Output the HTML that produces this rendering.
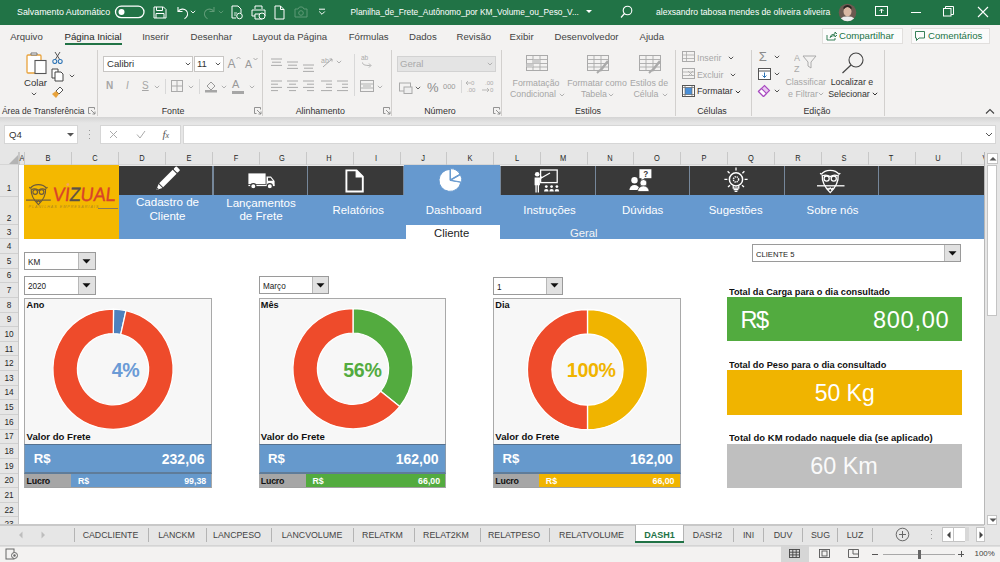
<!DOCTYPE html><html><head><meta charset="utf-8"><style>
html,body{margin:0;padding:0}
body{width:1000px;height:562px;overflow:hidden;position:relative;background:#fff;font-family:"Liberation Sans",sans-serif}
.t{position:absolute;white-space:nowrap}
.r{position:absolute;display:block}
</style></head><body>
<div class="r" style="left:0px;top:0px;width:1000.00px;height:24.50px;background:#217346;"></div>
<div class="t" style="left:17px;top:7.55px;font-size:8.9px;line-height:8.9px;color:#fff;font-weight:normal;font-family:'Liberation Sans';">Salvamento Automático</div>
<svg class="r" style="left:114px;top:5px" width="32" height="14" viewBox="0 0 32 14"><rect x="1.5" y="1.2" width="28.5" height="11.5" rx="5.75" fill="none" stroke="#fff" stroke-width="1.3"/><circle cx="7.5" cy="7" r="3" fill="#fff"/></svg>
<svg class="r" style="left:153px;top:6px" width="14" height="13" viewBox="0 0 14 13"><path d="M1 1h9.5l2.5 2.5V12H1z M3.5 1v3.5h6V1 M3 12V7.5h8V12" fill="none" stroke="#fff" stroke-width="1"/></svg>
<svg class="r" style="left:174px;top:5px" width="16" height="15" viewBox="0 0 16 15"><path d="M4 2v4.5h4.5" fill="none" stroke="#fff" stroke-width="1.1"/><path d="M4.3 6.3C6 3.8 10 3.3 12.3 5.6c2.4 2.4 1.5 6.5-1.8 8.2" fill="none" stroke="#fff" stroke-width="1.1"/></svg>
<svg class="r" style="left:190px;top:10px" width="6" height="4" viewBox="0 0 6 4"><path d="M0.8 0.8l2.2 2.2 2.2-2.2" fill="none" stroke="#fff" stroke-width="0.9"/></svg>
<svg class="r" style="left:202px;top:5px" width="16" height="15" viewBox="0 0 16 15"><path d="M12 2v4.5h-4.5" fill="none" stroke="#5f9a76" stroke-width="1.1"/><path d="M11.7 6.3C10 3.8 6 3.3 3.7 5.6c-2.4 2.4-1.5 6.5 1.8 8.2" fill="none" stroke="#5f9a76" stroke-width="1.1"/></svg>
<svg class="r" style="left:218px;top:10px" width="6" height="4" viewBox="0 0 6 4"><path d="M0.8 0.8l2.2 2.2 2.2-2.2" fill="none" stroke="#5f9a76" stroke-width="0.9"/></svg>
<svg class="r" style="left:231px;top:5px" width="13" height="15" viewBox="0 0 13 15"><path d="M1 1h6l3 3v4 M1 1v12h4" fill="none" stroke="#fff" stroke-width="1"/><circle cx="8.5" cy="11" r="2.8" fill="none" stroke="#fff" stroke-width="1"/><path d="M3 8h3M3 10h2" stroke="#fff" stroke-width="0.8"/></svg>
<svg class="r" style="left:251px;top:5px" width="15" height="15" viewBox="0 0 15 15"><path d="M4 4V1h7v3 M1 5h13v6h-3 M4 11H1V5 M4 9h7v5H4z" fill="none" stroke="#fff" stroke-width="1"/><circle cx="11" cy="11" r="3" fill="#217346" stroke="#fff" stroke-width="1"/></svg>
<svg class="r" style="left:274px;top:5px" width="11" height="15" viewBox="0 0 11 15"><path d="M1 1h5.5l3.5 3.5V14H1z M6.5 1v3.5H10" fill="none" stroke="#fff" stroke-width="1"/></svg>
<svg class="r" style="left:294px;top:6px" width="14" height="12" viewBox="0 0 14 12"><path d="M1 3h3l1.5-2h3L10 3h3v8H1z" fill="none" stroke="#5f9a76" stroke-width="1"/><circle cx="7" cy="7" r="2.3" fill="none" stroke="#5f9a76" stroke-width="1"/></svg>
<svg class="r" style="left:318px;top:8px" width="8" height="8" viewBox="0 0 8 8"><path d="M1 1.2h6" stroke="#fff" stroke-width="1"/><path d="M1.2 3.5l2.8 2.8 2.8-2.8" fill="none" stroke="#fff" stroke-width="1"/></svg>
<div class="t" style="left:350.5px;top:7.83px;font-size:8.35px;line-height:8.35px;color:#fff;font-weight:normal;font-family:'Liberation Sans';">Planilha_de_Frete_Autônomo_por KM_Volume_ou_Peso_V...</div>
<svg class="r" style="left:586px;top:10px" width="6" height="4" viewBox="0 0 6 4"><path d="M0 0h6l-3 3z" fill="#fff"/></svg>
<svg class="r" style="left:620px;top:5px" width="13" height="14" viewBox="0 0 13 14"><circle cx="7.5" cy="5.5" r="4.3" fill="none" stroke="#fff" stroke-width="1.1"/><path d="M4.5 8.5L1 12.5" stroke="#fff" stroke-width="1.2"/></svg>
<div class="t" style="left:656px;top:7.70px;font-size:8.6px;line-height:8.6px;color:#fff;font-weight:normal;font-family:'Liberation Sans';">alexsandro tabosa mendes de oliveira oliveira</div>
<svg class="r" style="left:838px;top:3px" width="19" height="19" viewBox="0 0 19 19"><defs><clipPath id="av"><circle cx="9.5" cy="9.5" r="8.8"/></clipPath></defs><g clip-path="url(#av)"><rect width="19" height="19" fill="#6b5a50"/><ellipse cx="9.5" cy="8.5" rx="4" ry="5" fill="#d9b8a3"/><path d="M5.5 6.5Q9.5 1.5 13.5 6.5L13.5 4Q9.5 0 5.5 4z" fill="#2a2320"/><path d="M1 19Q2 13 9.5 13.5Q17 13 18 19z" fill="#ececec"/></g></svg>
<svg class="r" style="left:875px;top:6px" width="13" height="11" viewBox="0 0 13 11"><rect x="0.5" y="0.5" width="12" height="9" fill="none" stroke="#fff" stroke-width="1"/><path d="M6.5 7V3M4.5 5l2-2 2 2" fill="none" stroke="#fff" stroke-width="1"/></svg>
<div class="r" style="left:911px;top:12px;width:10.00px;height:1.00px;background:#fff;"></div>
<svg class="r" style="left:943px;top:6px" width="11" height="11" viewBox="0 0 11 11"><rect x="0.5" y="2.5" width="7.5" height="7.5" fill="none" stroke="#fff" stroke-width="1"/><path d="M2.5 2.5V0.5h8v8H8" fill="none" stroke="#fff" stroke-width="1"/></svg>
<svg class="r" style="left:977px;top:6px" width="12" height="12" viewBox="0 0 12 12"><path d="M1 1l10 10M11 1L1 11" stroke="#fff" stroke-width="1.1"/></svg>
<div class="r" style="left:0px;top:24.5px;width:1000.00px;height:92.50px;background:#f3f2f1;"></div>
<div class="t" style="left:10.2px;top:31.70px;font-size:9.6px;line-height:9.6px;color:#444;font-weight:normal;font-family:'Liberation Sans';">Arquivo</div>
<div class="t" style="left:64.6px;top:31.70px;font-size:9.6px;line-height:9.6px;color:#262626;font-weight:normal;font-family:'Liberation Sans';">Página Inicial</div>
<div class="t" style="left:142.2px;top:31.70px;font-size:9.6px;line-height:9.6px;color:#444;font-weight:normal;font-family:'Liberation Sans';">Inserir</div>
<div class="t" style="left:190.5px;top:31.70px;font-size:9.6px;line-height:9.6px;color:#444;font-weight:normal;font-family:'Liberation Sans';">Desenhar</div>
<div class="t" style="left:252.4px;top:31.70px;font-size:9.6px;line-height:9.6px;color:#444;font-weight:normal;font-family:'Liberation Sans';">Layout da Página</div>
<div class="t" style="left:348.7px;top:31.70px;font-size:9.6px;line-height:9.6px;color:#444;font-weight:normal;font-family:'Liberation Sans';">Fórmulas</div>
<div class="t" style="left:409px;top:31.70px;font-size:9.6px;line-height:9.6px;color:#444;font-weight:normal;font-family:'Liberation Sans';">Dados</div>
<div class="t" style="left:456.5px;top:31.70px;font-size:9.6px;line-height:9.6px;color:#444;font-weight:normal;font-family:'Liberation Sans';">Revisão</div>
<div class="t" style="left:509.6px;top:31.70px;font-size:9.6px;line-height:9.6px;color:#444;font-weight:normal;font-family:'Liberation Sans';">Exibir</div>
<div class="t" style="left:554.5px;top:31.70px;font-size:9.6px;line-height:9.6px;color:#444;font-weight:normal;font-family:'Liberation Sans';">Desenvolvedor</div>
<div class="t" style="left:639.5px;top:31.70px;font-size:9.6px;line-height:9.6px;color:#444;font-weight:normal;font-family:'Liberation Sans';">Ajuda</div>
<div class="r" style="left:64.6px;top:43px;width:57.80px;height:2.00px;background:#217346;"></div>
<div class="r" style="left:822px;top:28px;width:81.00px;height:15.60px;background:#fbfbfb;border:1px solid #e1dfdd;box-sizing:border-box;"></div>
<svg class="r" style="left:826px;top:31px" width="11" height="10" viewBox="0 0 11 10"><path d="M1 4v5h8V7 M4 6.5Q4.5 3 9 3V1l2.5 2.5L9 6V4.5Q6 4.5 4 6.5z" fill="none" stroke="#217346" stroke-width="0.9"/></svg>
<div class="t" style="left:839px;top:31.20px;font-size:9.6px;line-height:9.6px;color:#217346;font-weight:normal;font-family:'Liberation Sans';">Compartilhar</div>
<div class="r" style="left:911px;top:28px;width:79.00px;height:15.60px;background:#fbfbfb;border:1px solid #e1dfdd;box-sizing:border-box;"></div>
<svg class="r" style="left:915px;top:31px" width="10" height="10" viewBox="0 0 10 10"><path d="M0.5 0.5h9v6.5H4l-2.5 2.5V7H0.5z" fill="none" stroke="#217346" stroke-width="0.9"/></svg>
<div class="t" style="left:928px;top:31.20px;font-size:9.6px;line-height:9.6px;color:#217346;font-weight:normal;font-family:'Liberation Sans';">Comentários</div>
<div class="r" style="left:97px;top:50px;width:1.00px;height:66.00px;background:#d2d0ce;"></div>
<div class="r" style="left:262px;top:50px;width:1.00px;height:66.00px;background:#d2d0ce;"></div>
<div class="r" style="left:391px;top:50px;width:1.00px;height:66.00px;background:#d2d0ce;"></div>
<div class="r" style="left:501px;top:50px;width:1.00px;height:66.00px;background:#d2d0ce;"></div>
<div class="r" style="left:674.5px;top:50px;width:1.00px;height:66.00px;background:#d2d0ce;"></div>
<div class="r" style="left:750.6px;top:50px;width:1.00px;height:66.00px;background:#d2d0ce;"></div>
<div class="r" style="left:884px;top:50px;width:1.00px;height:66.00px;background:#d2d0ce;"></div>
<div class="t" style="left:2px;top:106.80px;font-size:8.4px;line-height:8.4px;color:#333;font-weight:normal;font-family:'Liberation Sans';">Área de Transferência</div>
<div class="t" style="left:-127px;width:600px;text-align:center;top:106.55px;font-size:8.9px;line-height:8.9px;color:#333;font-weight:normal;font-family:'Liberation Sans';">Fonte</div>
<div class="t" style="left:20.30000000000001px;width:600px;text-align:center;top:106.55px;font-size:8.9px;line-height:8.9px;color:#333;font-weight:normal;font-family:'Liberation Sans';">Alinhamento</div>
<div class="t" style="left:140px;width:600px;text-align:center;top:106.55px;font-size:8.9px;line-height:8.9px;color:#333;font-weight:normal;font-family:'Liberation Sans';">Número</div>
<div class="t" style="left:288px;width:600px;text-align:center;top:106.55px;font-size:8.9px;line-height:8.9px;color:#333;font-weight:normal;font-family:'Liberation Sans';">Estilos</div>
<div class="t" style="left:412px;width:600px;text-align:center;top:106.55px;font-size:8.9px;line-height:8.9px;color:#333;font-weight:normal;font-family:'Liberation Sans';">Células</div>
<div class="t" style="left:517px;width:600px;text-align:center;top:106.55px;font-size:8.9px;line-height:8.9px;color:#333;font-weight:normal;font-family:'Liberation Sans';">Edição</div>
<svg class="r" style="left:88px;top:107px" width="8" height="8" viewBox="0 0 8 8"><path d="M0.5 0.5h6v2 M0.5 0.5v6h2 M3 3l4 4M7 4.5V7H4.5" fill="none" stroke="#888" stroke-width="0.9"/></svg>
<svg class="r" style="left:254px;top:107px" width="8" height="8" viewBox="0 0 8 8"><path d="M0.5 0.5h6v2 M0.5 0.5v6h2 M3 3l4 4M7 4.5V7H4.5" fill="none" stroke="#888" stroke-width="0.9"/></svg>
<svg class="r" style="left:383px;top:107px" width="8" height="8" viewBox="0 0 8 8"><path d="M0.5 0.5h6v2 M0.5 0.5v6h2 M3 3l4 4M7 4.5V7H4.5" fill="none" stroke="#888" stroke-width="0.9"/></svg>
<svg class="r" style="left:493px;top:107px" width="8" height="8" viewBox="0 0 8 8"><path d="M0.5 0.5h6v2 M0.5 0.5v6h2 M3 3l4 4M7 4.5V7H4.5" fill="none" stroke="#888" stroke-width="0.9"/></svg>
<svg class="r" style="left:985px;top:108px" width="10" height="7" viewBox="0 0 10 7"><path d="M1 5.5L5 1.5 9 5.5" fill="none" stroke="#444" stroke-width="1.1"/></svg>
<svg class="r" style="left:24px;top:51px" width="24" height="24" viewBox="0 0 24 24"><rect x="3" y="4" width="14" height="18" rx="1" fill="#fff" stroke="#e8a33d" stroke-width="1.3"/><path d="M7 4V2h6v2z" fill="#fff" stroke="#777" stroke-width="1"/><rect x="11" y="9.5" width="11" height="13" fill="#fff" stroke="#555" stroke-width="1.1"/></svg>
<div class="t" style="left:24px;top:77.70px;font-size:9.6px;line-height:9.6px;color:#333;font-weight:normal;font-family:'Liberation Sans';">Colar</div>
<svg class="r" style="left:31px;top:92px" width="6" height="4" viewBox="0 0 6 4"><path d="M0.8 0.8l2.2 2.2 2.2-2.2" fill="none" stroke="#444" stroke-width="0.9"/></svg>
<svg class="r" style="left:52px;top:51px" width="11" height="13" viewBox="0 0 11 13"><path d="M3 1l5 8M8 1L3 9" stroke="#555" stroke-width="1"/><circle cx="2.8" cy="10.5" r="2" fill="none" stroke="#2e75b6" stroke-width="1.1"/><circle cx="8.2" cy="10.5" r="2" fill="none" stroke="#2e75b6" stroke-width="1.1"/></svg>
<svg class="r" style="left:51px;top:68px" width="14" height="14" viewBox="0 0 14 14"><path d="M1 1h6v9H1z" fill="#fff" stroke="#444" stroke-width="1"/><path d="M4 4h6l2 2v7H4z" fill="#fff" stroke="#444" stroke-width="1"/></svg>
<svg class="r" style="left:69px;top:74px" width="6" height="4" viewBox="0 0 6 4"><path d="M0.8 0.8l2.2 2.2 2.2-2.2" fill="none" stroke="#444" stroke-width="0.9"/></svg>
<svg class="r" style="left:51px;top:86px" width="14" height="13" viewBox="0 0 14 13"><path d="M9 1l3 3-4 4-3-3z" fill="#fff" stroke="#555" stroke-width="1"/><path d="M5 5L1 8l4 4 3-4z" fill="#e8a33d"/></svg>
<div class="r" style="left:103.25px;top:55.5px;width:89.75px;height:16.50px;background:#fff;border:1px solid #c8c6c4;box-sizing:border-box;"></div>
<div class="t" style="left:107px;top:59.20px;font-size:9.6px;line-height:9.6px;color:#333;font-weight:normal;font-family:'Liberation Sans';">Calibri</div>
<svg class="r" style="left:185px;top:62px" width="6" height="4" viewBox="0 0 6 4"><path d="M0.8 0.8l2.2 2.2 2.2-2.2" fill="none" stroke="#444" stroke-width="0.9"/></svg>
<div class="r" style="left:193.75px;top:55.5px;width:30.25px;height:16.50px;background:#fff;border:1px solid #c8c6c4;box-sizing:border-box;"></div>
<div class="t" style="left:197px;top:59.20px;font-size:9.6px;line-height:9.6px;color:#333;font-weight:normal;font-family:'Liberation Sans';">11</div>
<svg class="r" style="left:215px;top:62px" width="6" height="4" viewBox="0 0 6 4"><path d="M0.8 0.8l2.2 2.2 2.2-2.2" fill="none" stroke="#444" stroke-width="0.9"/></svg>
<div class="t" style="left:227.5px;top:57.50px;font-size:12px;line-height:12px;color:#999;font-weight:normal;font-family:'Liberation Sans';">A</div>
<svg class="r" style="left:236px;top:56px" width="5" height="4" viewBox="0 0 5 4"><path d="M0.5 3L2.5 1 4.5 3" fill="none" stroke="#999" stroke-width="0.8"/></svg>
<div class="t" style="left:245px;top:59.25px;font-size:10.5px;line-height:10.5px;color:#999;font-weight:normal;font-family:'Liberation Sans';">A</div>
<svg class="r" style="left:253px;top:57px" width="5" height="4" viewBox="0 0 5 4"><path d="M0.5 1L2.5 3 4.5 1" fill="none" stroke="#999" stroke-width="0.8"/></svg>
<div class="t" style="left:106px;top:81.00px;font-size:10px;line-height:10px;color:#a6a6a6;font-weight:bold;font-family:'Liberation Sans';">N</div>
<div class="t" style="left:126px;top:81.00px;font-size:10px;line-height:10px;color:#a6a6a6;font-weight:normal;font-family:'Liberation Sans';font-style:italic;">I</div>
<div class="t" style="left:142px;top:80.50px;font-size:10px;line-height:10px;color:#a6a6a6;font-weight:normal;font-family:'Liberation Sans';text-decoration:underline;">S</div>
<svg class="r" style="left:154px;top:85px" width="6" height="4" viewBox="0 0 6 4"><path d="M0.8 0.8l2.2 2.2 2.2-2.2" fill="none" stroke="#aaa" stroke-width="0.9"/></svg>
<svg class="r" style="left:188px;top:85px" width="6" height="4" viewBox="0 0 6 4"><path d="M0.8 0.8l2.2 2.2 2.2-2.2" fill="none" stroke="#aaa" stroke-width="0.9"/></svg>
<svg class="r" style="left:221px;top:85px" width="6" height="4" viewBox="0 0 6 4"><path d="M0.8 0.8l2.2 2.2 2.2-2.2" fill="none" stroke="#aaa" stroke-width="0.9"/></svg>
<svg class="r" style="left:249px;top:85px" width="6" height="4" viewBox="0 0 6 4"><path d="M0.8 0.8l2.2 2.2 2.2-2.2" fill="none" stroke="#aaa" stroke-width="0.9"/></svg>
<div class="r" style="left:165px;top:79px;width:1.00px;height:15.00px;background:#d8d8d8;"></div>
<div class="r" style="left:199px;top:79px;width:1.00px;height:15.00px;background:#d8d8d8;"></div>
<svg class="r" style="left:171px;top:80px" width="12" height="12" viewBox="0 0 12 12"><rect x="0.5" y="0.5" width="11" height="11" fill="none" stroke="#aaa" stroke-width="1"/><path d="M6 0.5v11M0.5 6h11" stroke="#aaa" stroke-width="1"/></svg>
<svg class="r" style="left:204px;top:79px" width="14" height="14" viewBox="0 0 14 14"><path d="M3 7l4-4 4 4-4 4z" fill="none" stroke="#999" stroke-width="1"/><rect x="1" y="11" width="12" height="2.5" fill="#a6a6a6"/></svg>
<div class="t" style="left:232px;top:79.00px;font-size:11px;line-height:11px;color:#999;font-weight:normal;font-family:'Liberation Sans';">A</div>
<div class="r" style="left:232px;top:91px;width:12.00px;height:2.50px;background:#a6a6a6;"></div>
<svg class="r" style="left:271px;top:58px" width="12" height="12" viewBox="0 0 12 12"><path d="M0 1.0h11" stroke="#aaa" stroke-width="1"/><path d="M1 4.2h9" stroke="#aaa" stroke-width="1"/><path d="M0 7.4h11" stroke="#aaa" stroke-width="1"/></svg>
<svg class="r" style="left:287px;top:61px" width="12" height="12" viewBox="0 0 12 12"><path d="M0 1.0h11" stroke="#aaa" stroke-width="1"/><path d="M1 4.2h9" stroke="#aaa" stroke-width="1"/><path d="M0 7.4h11" stroke="#aaa" stroke-width="1"/></svg>
<svg class="r" style="left:303px;top:64px" width="12" height="12" viewBox="0 0 12 12"><path d="M0 1.0h11" stroke="#aaa" stroke-width="1"/><path d="M1 4.2h9" stroke="#aaa" stroke-width="1"/><path d="M0 7.4h11" stroke="#aaa" stroke-width="1"/></svg>
<svg class="r" style="left:320px;top:55px" width="14" height="14" viewBox="0 0 14 14"><text x="1" y="8" font-size="7" fill="#aaa" font-family="Liberation Sans">ab</text><path d="M3 12L12 4M9.5 4H12v2.5" fill="none" stroke="#aaa" stroke-width="1"/></svg>
<svg class="r" style="left:336px;top:60px" width="6" height="4" viewBox="0 0 6 4"><path d="M0.8 0.8l2.2 2.2 2.2-2.2" fill="none" stroke="#aaa" stroke-width="0.9"/></svg>
<svg class="r" style="left:271px;top:80px" width="12" height="12" viewBox="0 0 12 12"><path d="M0 1.0h11" stroke="#aaa" stroke-width="1"/><path d="M0 4.2h7" stroke="#aaa" stroke-width="1"/><path d="M0 7.4h11" stroke="#aaa" stroke-width="1"/><path d="M0 10.600000000000001h7" stroke="#aaa" stroke-width="1"/></svg>
<svg class="r" style="left:287px;top:80px" width="12" height="12" viewBox="0 0 12 12"><path d="M0 1.0h11" stroke="#aaa" stroke-width="1"/><path d="M2 4.2h7" stroke="#aaa" stroke-width="1"/><path d="M0 7.4h11" stroke="#aaa" stroke-width="1"/><path d="M2 10.600000000000001h7" stroke="#aaa" stroke-width="1"/></svg>
<svg class="r" style="left:303px;top:80px" width="12" height="12" viewBox="0 0 12 12"><path d="M0 1.0h11" stroke="#aaa" stroke-width="1"/><path d="M4 4.2h7" stroke="#aaa" stroke-width="1"/><path d="M0 7.4h11" stroke="#aaa" stroke-width="1"/><path d="M4 10.600000000000001h7" stroke="#aaa" stroke-width="1"/></svg>
<svg class="r" style="left:321px;top:80px" width="12" height="12" viewBox="0 0 12 12"><path d="M0 1.0h11" stroke="#aaa" stroke-width="1"/><path d="M5 4.2h6" stroke="#aaa" stroke-width="1"/><path d="M5 7.4h6" stroke="#aaa" stroke-width="1"/><path d="M0 10.600000000000001h11" stroke="#aaa" stroke-width="1"/></svg>
<svg class="r" style="left:337px;top:80px" width="12" height="12" viewBox="0 0 12 12"><path d="M0 1.0h11" stroke="#aaa" stroke-width="1"/><path d="M5 4.2h6" stroke="#aaa" stroke-width="1"/><path d="M5 7.4h6" stroke="#aaa" stroke-width="1"/><path d="M0 10.600000000000001h11" stroke="#aaa" stroke-width="1"/></svg>
<div class="r" style="left:354px;top:54px;width:1.00px;height:42.00px;background:#d8d8d8;"></div>
<svg class="r" style="left:361px;top:54px" width="13" height="14" viewBox="0 0 13 14"><text x="0" y="6" font-size="6.5" fill="#aaa" font-family="Liberation Sans">ab</text><path d="M1.5 8.5c0 3 5 3 8 3M8 9.5l2 2-2 2" fill="none" stroke="#aaa" stroke-width="0.9"/></svg>
<svg class="r" style="left:360px;top:80px" width="14" height="12" viewBox="0 0 14 12"><rect x="0.5" y="0.5" width="13" height="11" fill="none" stroke="#aaa" stroke-width="1"/><path d="M0.5 4h13M0.5 8h13M3 6h8" stroke="#aaa" stroke-width="0.9"/></svg>
<svg class="r" style="left:377px;top:85px" width="6" height="4" viewBox="0 0 6 4"><path d="M0.8 0.8l2.2 2.2 2.2-2.2" fill="none" stroke="#aaa" stroke-width="0.9"/></svg>
<div class="r" style="left:397px;top:55.5px;width:98.50px;height:16.50px;background:#e4e4e4;border:1px solid #d2d2d2;box-sizing:border-box;"></div>
<div class="t" style="left:400px;top:59.20px;font-size:9.6px;line-height:9.6px;color:#aaa;font-weight:normal;font-family:'Liberation Sans';">Geral</div>
<svg class="r" style="left:487px;top:62px" width="6" height="4" viewBox="0 0 6 4"><path d="M0.8 0.8l2.2 2.2 2.2-2.2" fill="none" stroke="#aaa" stroke-width="0.9"/></svg>
<svg class="r" style="left:399px;top:81.5px" width="14" height="12" viewBox="0 0 14 12"><rect x="0.5" y="1" width="11" height="8" fill="none" stroke="#aaa" stroke-width="1"/><rect x="5" y="5" width="8" height="6.5" fill="#eee" stroke="#aaa" stroke-width="1"/></svg>
<svg class="r" style="left:415px;top:86px" width="6" height="4" viewBox="0 0 6 4"><path d="M0.8 0.8l2.2 2.2 2.2-2.2" fill="none" stroke="#666" stroke-width="1"/></svg>
<div class="t" style="left:427px;top:81.10px;font-size:13px;line-height:13px;color:#8c8c8c;font-weight:normal;font-family:'Liberation Sans';">%</div>
<div class="t" style="left:443px;top:83.05px;font-size:7.5px;line-height:7.5px;color:#999;font-weight:normal;font-family:'Liberation Sans';">000</div>
<div class="r" style="left:461px;top:80px;width:1.00px;height:13.00px;background:#d8d8d8;"></div>
<svg class="r" style="left:465px;top:79px" width="14" height="15" viewBox="0 0 14 15"><text x="6" y="6" font-size="6" fill="#aaa" font-family="Liberation Sans">0</text><text x="2" y="13" font-size="6" fill="#aaa" font-family="Liberation Sans">.00</text><path d="M6 4H1M3 2L1 4l2 2" fill="none" stroke="#aaa" stroke-width="0.8"/></svg>
<svg class="r" style="left:481px;top:79px" width="14" height="15" viewBox="0 0 14 15"><text x="4" y="6" font-size="6" fill="#aaa" font-family="Liberation Sans">.00</text><text x="9" y="13" font-size="6" fill="#aaa" font-family="Liberation Sans">0</text><path d="M1 11h7M6 9l2 2-2 2" fill="none" stroke="#aaa" stroke-width="0.8"/></svg>
<svg class="r" style="left:526px;top:55px" width="23" height="19" viewBox="0 0 23 19"><rect x="0.5" y="0.5" width="21" height="15" fill="none" stroke="#aaa" stroke-width="1"/><path d="M0.5 4.5h21" stroke="#aaa" stroke-width="0.9"/><path d="M0.5 8.5h21" stroke="#aaa" stroke-width="0.9"/><path d="M0.5 12h21" stroke="#aaa" stroke-width="0.9"/><path d="M7 0.5v15" stroke="#aaa" stroke-width="0.9"/><path d="M14 0.5v15" stroke="#aaa" stroke-width="0.9"/><rect x="7" y="4.5" width="7" height="4" fill="#ccc"/><rect x="0.5" y="8.5" width="6.5" height="3.5" fill="#ccc"/></svg>
<svg class="r" style="left:587px;top:55px" width="23" height="19" viewBox="0 0 23 19"><rect x="0.5" y="0.5" width="21" height="15" fill="none" stroke="#aaa" stroke-width="1"/><path d="M0.5 4.5h21" stroke="#aaa" stroke-width="0.9"/><path d="M0.5 8.5h21" stroke="#aaa" stroke-width="0.9"/><path d="M0.5 12h21" stroke="#aaa" stroke-width="0.9"/><path d="M7 0.5v15" stroke="#aaa" stroke-width="0.9"/><path d="M14 0.5v15" stroke="#aaa" stroke-width="0.9"/><path d="M21 6L13 16" stroke="#aaa" stroke-width="2.5"/><path d="M13 15l-3 3" stroke="#aaa" stroke-width="2"/></svg>
<svg class="r" style="left:639px;top:55px" width="23" height="19" viewBox="0 0 23 19"><rect x="0.5" y="0.5" width="21" height="15" fill="none" stroke="#aaa" stroke-width="1"/><path d="M0.5 4.5h21" stroke="#aaa" stroke-width="0.9"/><path d="M0.5 8.5h21" stroke="#aaa" stroke-width="0.9"/><path d="M0.5 12h21" stroke="#aaa" stroke-width="0.9"/><path d="M7 0.5v15" stroke="#aaa" stroke-width="0.9"/><path d="M14 0.5v15" stroke="#aaa" stroke-width="0.9"/><path d="M21 6L13 16" stroke="#aaa" stroke-width="2.5"/><path d="M13 15l-3 3" stroke="#aaa" stroke-width="2"/></svg>
<div class="t" style="left:236px;width:600px;text-align:center;top:78.60px;font-size:8.8px;line-height:8.8px;color:#a6a6a6;font-weight:normal;font-family:'Liberation Sans';">Formatação</div>
<div class="t" style="left:233px;width:600px;text-align:center;top:90.10px;font-size:8.8px;line-height:8.8px;color:#a6a6a6;font-weight:normal;font-family:'Liberation Sans';">Condicional</div>
<div class="t" style="left:297px;width:600px;text-align:center;top:78.60px;font-size:8.8px;line-height:8.8px;color:#a6a6a6;font-weight:normal;font-family:'Liberation Sans';">Formatar como</div>
<div class="t" style="left:294px;width:600px;text-align:center;top:90.10px;font-size:8.8px;line-height:8.8px;color:#a6a6a6;font-weight:normal;font-family:'Liberation Sans';">Tabela</div>
<div class="t" style="left:349px;width:600px;text-align:center;top:78.60px;font-size:8.8px;line-height:8.8px;color:#a6a6a6;font-weight:normal;font-family:'Liberation Sans';">Estilos de</div>
<div class="t" style="left:346px;width:600px;text-align:center;top:90.10px;font-size:8.8px;line-height:8.8px;color:#a6a6a6;font-weight:normal;font-family:'Liberation Sans';">Célula</div>
<svg class="r" style="left:559px;top:93px" width="6" height="4" viewBox="0 0 6 4"><path d="M0.8 0.8l2.2 2.2 2.2-2.2" fill="none" stroke="#aaa" stroke-width="0.9"/></svg>
<svg class="r" style="left:608px;top:93px" width="6" height="4" viewBox="0 0 6 4"><path d="M0.8 0.8l2.2 2.2 2.2-2.2" fill="none" stroke="#aaa" stroke-width="0.9"/></svg>
<svg class="r" style="left:662px;top:93px" width="6" height="4" viewBox="0 0 6 4"><path d="M0.8 0.8l2.2 2.2 2.2-2.2" fill="none" stroke="#aaa" stroke-width="0.9"/></svg>
<svg class="r" style="left:682px;top:51px" width="13" height="12" viewBox="0 0 13 12"><rect x="0.5" y="0.5" width="12" height="10" fill="none" stroke="#aaa" stroke-width="1"/><path d="M0.5 4h12M0.5 7.5h12M4.5 0.5v10" stroke="#aaa" stroke-width="0.8"/></svg>
<div class="t" style="left:697px;top:53.80px;font-size:8.8px;line-height:8.8px;color:#a6a6a6;font-weight:normal;font-family:'Liberation Sans';">Inserir</div>
<svg class="r" style="left:682px;top:68px" width="13" height="12" viewBox="0 0 13 12"><rect x="0.5" y="0.5" width="12" height="10" fill="none" stroke="#aaa" stroke-width="1"/><path d="M0.5 4h12M0.5 7.5h12M6 3l5 5M11 3L6 8" stroke="#aaa" stroke-width="0.8"/></svg>
<div class="t" style="left:697px;top:70.60px;font-size:8.8px;line-height:8.8px;color:#a6a6a6;font-weight:normal;font-family:'Liberation Sans';">Excluir</div>
<svg class="r" style="left:682px;top:85px" width="13" height="12" viewBox="0 0 13 12"><rect x="0.5" y="0.5" width="12" height="11" fill="#fff" stroke="#555" stroke-width="1"/><rect x="3" y="2.5" width="7" height="7" fill="#4a90d9"/><path d="M3 0.5v11M10 0.5v11M0.5 2.5h12M0.5 9.5h12" stroke="#666" stroke-width="0.7"/></svg>
<div class="t" style="left:697px;top:86.60px;font-size:8.8px;line-height:8.8px;color:#333;font-weight:normal;font-family:'Liberation Sans';">Formatar</div>
<svg class="r" style="left:728px;top:56px" width="6" height="4" viewBox="0 0 6 4"><path d="M0.8 0.8l2.2 2.2 2.2-2.2" fill="none" stroke="#555" stroke-width="1"/></svg>
<svg class="r" style="left:730px;top:73px" width="6" height="4" viewBox="0 0 6 4"><path d="M0.8 0.8l2.2 2.2 2.2-2.2" fill="none" stroke="#555" stroke-width="1"/></svg>
<svg class="r" style="left:735px;top:90px" width="6" height="4" viewBox="0 0 6 4"><path d="M0.8 0.8l2.2 2.2 2.2-2.2" fill="none" stroke="#333" stroke-width="1"/></svg>
<div class="t" style="left:758.5px;top:51.25px;font-size:12.5px;line-height:12.5px;color:#8a8a8a;font-weight:normal;font-family:'Liberation Sans';font-weight:normal;transform:scaleX(1.05);">Σ</div>
<svg class="r" style="left:774px;top:55px" width="6" height="4" viewBox="0 0 6 4"><path d="M0.8 0.8l2.2 2.2 2.2-2.2" fill="none" stroke="#555" stroke-width="1"/></svg>
<svg class="r" style="left:758px;top:68px" width="13" height="12" viewBox="0 0 13 12"><rect x="0.5" y="0.5" width="12" height="11" fill="#fff" stroke="#555" stroke-width="1"/><path d="M0.5 3h12" stroke="#555" stroke-width="1"/><path d="M6.5 4.5v5M4.5 7.5l2 2 2-2" fill="none" stroke="#2e75b6" stroke-width="1"/></svg>
<svg class="r" style="left:774px;top:72px" width="6" height="4" viewBox="0 0 6 4"><path d="M0.8 0.8l2.2 2.2 2.2-2.2" fill="none" stroke="#555" stroke-width="1"/></svg>
<svg class="r" style="left:757px;top:84px" width="14" height="13" viewBox="0 0 14 13"><path d="M1.5 7.5L7.5 1.5l5 5-6 6z" fill="#e9c9f0" stroke="#a849c0" stroke-width="1.1"/><path d="M1.5 7.5l3-3 5 5-3 3z" fill="#fff" stroke="#a849c0" stroke-width="1.1"/></svg>
<svg class="r" style="left:774px;top:89px" width="6" height="4" viewBox="0 0 6 4"><path d="M0.8 0.8l2.2 2.2 2.2-2.2" fill="none" stroke="#555" stroke-width="1"/></svg>
<svg class="r" style="left:794px;top:52px" width="23" height="21" viewBox="0 0 23 21"><text x="0" y="9" font-size="9" fill="#aaa" font-family="Liberation Sans">A</text><text x="0" y="20" font-size="9" fill="#aaa" font-family="Liberation Sans">Z</text><path d="M9 4h13l-5 6v6l-3-2v-4z" fill="none" stroke="#aaa" stroke-width="1"/></svg>
<div class="t" style="left:505.70000000000005px;width:600px;text-align:center;top:78.35px;font-size:8.8px;line-height:8.8px;color:#a6a6a6;font-weight:normal;font-family:'Liberation Sans';">Classificar</div>
<div class="t" style="left:503px;width:600px;text-align:center;top:89.80px;font-size:8.8px;line-height:8.8px;color:#a6a6a6;font-weight:normal;font-family:'Liberation Sans';">e Filtrar</div>
<svg class="r" style="left:818px;top:92px" width="6" height="4" viewBox="0 0 6 4"><path d="M0.8 0.8l2.2 2.2 2.2-2.2" fill="none" stroke="#aaa" stroke-width="0.9"/></svg>
<svg class="r" style="left:841px;top:52px" width="24" height="22" viewBox="0 0 24 22"><circle cx="15" cy="8" r="7" fill="none" stroke="#444" stroke-width="1.1"/><path d="M10 13L1.5 21" stroke="#444" stroke-width="1.2"/></svg>
<div class="t" style="left:552px;width:600px;text-align:center;top:78.35px;font-size:8.8px;line-height:8.8px;color:#333;font-weight:normal;font-family:'Liberation Sans';">Localizar e</div>
<div class="t" style="left:549px;width:600px;text-align:center;top:89.80px;font-size:8.8px;line-height:8.8px;color:#333;font-weight:normal;font-family:'Liberation Sans';">Selecionar</div>
<svg class="r" style="left:872px;top:92px" width="6" height="4" viewBox="0 0 6 4"><path d="M0.8 0.8l2.2 2.2 2.2-2.2" fill="none" stroke="#333" stroke-width="1"/></svg>
<div class="r" style="left:0px;top:117px;width:1000.00px;height:35.00px;background:#e6e6e6;"></div>
<div class="r" style="left:0px;top:116.6px;width:1000.00px;height:6.40px;background:linear-gradient(#d4d4d4,#e6e6e6);"></div>
<div class="r" style="left:4px;top:125px;width:74.00px;height:18.60px;background:#fff;border:1px solid #d6d6d6;box-sizing:border-box;"></div>
<div class="t" style="left:9px;top:129.70px;font-size:9.6px;line-height:9.6px;color:#333;font-weight:normal;font-family:'Liberation Sans';">Q4</div>
<svg class="r" style="left:67px;top:133px" width="7" height="4" viewBox="0 0 7 4"><path d="M0 0h7l-3.5 3.5z" fill="#555"/></svg>
<div class="r" style="left:88.5px;top:130px;width:1.50px;height:1.30px;background:#9a9a9a;"></div>
<div class="r" style="left:88.5px;top:134px;width:1.50px;height:1.30px;background:#9a9a9a;"></div>
<div class="r" style="left:88.5px;top:138px;width:1.50px;height:1.30px;background:#9a9a9a;"></div>
<div class="r" style="left:100px;top:125px;width:80.70px;height:18.60px;background:#fff;border:1px solid #d6d6d6;box-sizing:border-box;"></div>
<svg class="r" style="left:109px;top:130px" width="9" height="9" viewBox="0 0 9 9"><path d="M1 1l7 7M8 1L1 8" stroke="#aaa" stroke-width="1"/></svg>
<svg class="r" style="left:136px;top:130px" width="10" height="9" viewBox="0 0 10 9"><path d="M1 4.5l3 3.5 5-7" fill="none" stroke="#aaa" stroke-width="1"/></svg>
<div class="t" style="left:162.5px;top:129.00px;font-size:11px;line-height:11px;color:#555;font-weight:normal;font-family:'Liberation Serif';"><i>f<span style="font-size:8px">x</span></i></div>
<div class="r" style="left:183.4px;top:125px;width:812.60px;height:18.60px;background:#fff;border:1px solid #d6d6d6;box-sizing:border-box;"></div>
<svg class="r" style="left:985px;top:132px" width="8" height="5" viewBox="0 0 8 5"><path d="M1 1l3 3 3-3" fill="none" stroke="#555" stroke-width="1"/></svg>
<div class="r" style="left:0px;top:152px;width:984.00px;height:13.40px;background:#e6e6e6;"></div>
<div class="r" style="left:0px;top:164.2px;width:984.00px;height:1.00px;background:#d6d6d6;"></div>
<svg class="r" style="left:8px;top:154px" width="11" height="11" viewBox="0 0 11 11"><path d="M10 1v9H1z" fill="#b4b4b4"/></svg>
<div class="r" style="left:19px;top:152px;width:0.80px;height:13.00px;background:#c8c8c8;"></div>
<div class="t" style="left:-278.5px;width:600px;text-align:center;top:154.10px;font-size:8.8px;line-height:8.8px;color:#262626;font-weight:normal;font-family:'Liberation Sans';transform:scaleX(0.85);">A</div>
<div class="r" style="left:24px;top:152px;width:0.80px;height:13.00px;background:#c8c8c8;"></div>
<div class="t" style="left:-252.5px;width:600px;text-align:center;top:154.10px;font-size:8.8px;line-height:8.8px;color:#262626;font-weight:normal;font-family:'Liberation Sans';transform:scaleX(0.85);">B</div>
<div class="r" style="left:71px;top:152px;width:0.80px;height:13.00px;background:#c8c8c8;"></div>
<div class="t" style="left:-205.5px;width:600px;text-align:center;top:154.10px;font-size:8.8px;line-height:8.8px;color:#262626;font-weight:normal;font-family:'Liberation Sans';transform:scaleX(0.85);">C</div>
<div class="r" style="left:118px;top:152px;width:0.80px;height:13.00px;background:#c8c8c8;"></div>
<div class="t" style="left:-158.5px;width:600px;text-align:center;top:154.10px;font-size:8.8px;line-height:8.8px;color:#262626;font-weight:normal;font-family:'Liberation Sans';transform:scaleX(0.85);">D</div>
<div class="r" style="left:165px;top:152px;width:0.80px;height:13.00px;background:#c8c8c8;"></div>
<div class="t" style="left:-111.5px;width:600px;text-align:center;top:154.10px;font-size:8.8px;line-height:8.8px;color:#262626;font-weight:normal;font-family:'Liberation Sans';transform:scaleX(0.85);">E</div>
<div class="r" style="left:212px;top:152px;width:0.80px;height:13.00px;background:#c8c8c8;"></div>
<div class="t" style="left:-64.5px;width:600px;text-align:center;top:154.10px;font-size:8.8px;line-height:8.8px;color:#262626;font-weight:normal;font-family:'Liberation Sans';transform:scaleX(0.85);">F</div>
<div class="r" style="left:259px;top:152px;width:0.80px;height:13.00px;background:#c8c8c8;"></div>
<div class="t" style="left:-17.625px;width:600px;text-align:center;top:154.10px;font-size:8.8px;line-height:8.8px;color:#262626;font-weight:normal;font-family:'Liberation Sans';transform:scaleX(0.85);">G</div>
<div class="r" style="left:305.75px;top:152px;width:0.80px;height:13.00px;background:#c8c8c8;"></div>
<div class="t" style="left:29.125px;width:600px;text-align:center;top:154.10px;font-size:8.8px;line-height:8.8px;color:#262626;font-weight:normal;font-family:'Liberation Sans';transform:scaleX(0.85);">H</div>
<div class="r" style="left:352.5px;top:152px;width:0.80px;height:13.00px;background:#c8c8c8;"></div>
<div class="t" style="left:76.0px;width:600px;text-align:center;top:154.10px;font-size:8.8px;line-height:8.8px;color:#262626;font-weight:normal;font-family:'Liberation Sans';transform:scaleX(0.85);">I</div>
<div class="r" style="left:399.5px;top:152px;width:0.80px;height:13.00px;background:#c8c8c8;"></div>
<div class="t" style="left:122.875px;width:600px;text-align:center;top:154.10px;font-size:8.8px;line-height:8.8px;color:#262626;font-weight:normal;font-family:'Liberation Sans';transform:scaleX(0.85);">J</div>
<div class="r" style="left:446.25px;top:152px;width:0.80px;height:13.00px;background:#c8c8c8;"></div>
<div class="t" style="left:169.625px;width:600px;text-align:center;top:154.10px;font-size:8.8px;line-height:8.8px;color:#262626;font-weight:normal;font-family:'Liberation Sans';transform:scaleX(0.85);">K</div>
<div class="r" style="left:493px;top:152px;width:0.80px;height:13.00px;background:#c8c8c8;"></div>
<div class="t" style="left:216.5px;width:600px;text-align:center;top:154.10px;font-size:8.8px;line-height:8.8px;color:#262626;font-weight:normal;font-family:'Liberation Sans';transform:scaleX(0.85);">L</div>
<div class="r" style="left:540px;top:152px;width:0.80px;height:13.00px;background:#c8c8c8;"></div>
<div class="t" style="left:263.25px;width:600px;text-align:center;top:154.10px;font-size:8.8px;line-height:8.8px;color:#262626;font-weight:normal;font-family:'Liberation Sans';transform:scaleX(0.85);">M</div>
<div class="r" style="left:586.5px;top:152px;width:0.80px;height:13.00px;background:#c8c8c8;"></div>
<div class="t" style="left:309.9px;width:600px;text-align:center;top:154.10px;font-size:8.8px;line-height:8.8px;color:#262626;font-weight:normal;font-family:'Liberation Sans';transform:scaleX(0.85);">N</div>
<div class="r" style="left:633.3px;top:152px;width:0.80px;height:13.00px;background:#c8c8c8;"></div>
<div class="t" style="left:356.65px;width:600px;text-align:center;top:154.10px;font-size:8.8px;line-height:8.8px;color:#262626;font-weight:normal;font-family:'Liberation Sans';transform:scaleX(0.85);">O</div>
<div class="r" style="left:680px;top:152px;width:0.80px;height:13.00px;background:#c8c8c8;"></div>
<div class="t" style="left:403.5px;width:600px;text-align:center;top:154.10px;font-size:8.8px;line-height:8.8px;color:#262626;font-weight:normal;font-family:'Liberation Sans';transform:scaleX(0.85);">P</div>
<div class="r" style="left:727px;top:152px;width:0.80px;height:13.00px;background:#c8c8c8;"></div>
<div class="t" style="left:450.5px;width:600px;text-align:center;top:154.10px;font-size:8.8px;line-height:8.8px;color:#262626;font-weight:normal;font-family:'Liberation Sans';transform:scaleX(0.85);">Q</div>
<div class="r" style="left:774px;top:152px;width:0.80px;height:13.00px;background:#c8c8c8;"></div>
<div class="t" style="left:497.5px;width:600px;text-align:center;top:154.10px;font-size:8.8px;line-height:8.8px;color:#262626;font-weight:normal;font-family:'Liberation Sans';transform:scaleX(0.85);">R</div>
<div class="r" style="left:821px;top:152px;width:0.80px;height:13.00px;background:#c8c8c8;"></div>
<div class="t" style="left:544.25px;width:600px;text-align:center;top:154.10px;font-size:8.8px;line-height:8.8px;color:#262626;font-weight:normal;font-family:'Liberation Sans';transform:scaleX(0.85);">S</div>
<div class="r" style="left:867.5px;top:152px;width:0.80px;height:13.00px;background:#c8c8c8;"></div>
<div class="t" style="left:591.0px;width:600px;text-align:center;top:154.10px;font-size:8.8px;line-height:8.8px;color:#262626;font-weight:normal;font-family:'Liberation Sans';transform:scaleX(0.85);">T</div>
<div class="r" style="left:914.5px;top:152px;width:0.80px;height:13.00px;background:#c8c8c8;"></div>
<div class="t" style="left:637.75px;width:600px;text-align:center;top:154.10px;font-size:8.8px;line-height:8.8px;color:#262626;font-weight:normal;font-family:'Liberation Sans';transform:scaleX(0.85);">U</div>
<div class="r" style="left:961px;top:152px;width:0.80px;height:13.00px;background:#c8c8c8;"></div>
<div class="t" style="left:684.5px;width:600px;text-align:center;top:154.10px;font-size:8.8px;line-height:8.8px;color:#262626;font-weight:normal;font-family:'Liberation Sans';transform:scaleX(0.85);">V</div>
<div class="r" style="left:0px;top:165.4px;width:19.00px;height:359.00px;background:#e6e6e6;"></div>
<div class="r" style="left:18.4px;top:152px;width:0.80px;height:372.40px;background:#c6c6c6;"></div>
<div class="r" style="left:0px;top:195.6px;width:18.40px;height:0.80px;background:#d0d0d0;"></div>
<div class="t" style="left:-291.1px;width:600px;text-align:center;top:184.05px;font-size:8.7px;line-height:8.7px;color:#262626;font-weight:normal;font-family:'Liberation Sans';transform:scaleX(0.95);">1</div>
<div class="r" style="left:0px;top:224.1px;width:18.40px;height:0.80px;background:#d0d0d0;"></div>
<div class="t" style="left:-291.1px;width:600px;text-align:center;top:214.05px;font-size:8.7px;line-height:8.7px;color:#262626;font-weight:normal;font-family:'Liberation Sans';transform:scaleX(0.95);">2</div>
<div class="r" style="left:0px;top:238.29999999999998px;width:18.40px;height:0.80px;background:#d0d0d0;"></div>
<div class="t" style="left:-291.1px;width:600px;text-align:center;top:227.65px;font-size:8.7px;line-height:8.7px;color:#262626;font-weight:normal;font-family:'Liberation Sans';transform:scaleX(0.95);">3</div>
<div class="r" style="left:0px;top:252.93999999999997px;width:18.40px;height:0.80px;background:#d0d0d0;"></div>
<div class="t" style="left:-291.1px;width:600px;text-align:center;top:242.07px;font-size:8.7px;line-height:8.7px;color:#262626;font-weight:normal;font-family:'Liberation Sans';transform:scaleX(0.95);">4</div>
<div class="r" style="left:0px;top:267.58px;width:18.40px;height:0.80px;background:#d0d0d0;"></div>
<div class="t" style="left:-291.1px;width:600px;text-align:center;top:256.71px;font-size:8.7px;line-height:8.7px;color:#262626;font-weight:normal;font-family:'Liberation Sans';transform:scaleX(0.95);">5</div>
<div class="r" style="left:0px;top:282.21999999999997px;width:18.40px;height:0.80px;background:#d0d0d0;"></div>
<div class="t" style="left:-291.1px;width:600px;text-align:center;top:271.35px;font-size:8.7px;line-height:8.7px;color:#262626;font-weight:normal;font-family:'Liberation Sans';transform:scaleX(0.95);">6</div>
<div class="r" style="left:0px;top:296.85999999999996px;width:18.40px;height:0.80px;background:#d0d0d0;"></div>
<div class="t" style="left:-291.1px;width:600px;text-align:center;top:285.99px;font-size:8.7px;line-height:8.7px;color:#262626;font-weight:normal;font-family:'Liberation Sans';transform:scaleX(0.95);">7</div>
<div class="r" style="left:0px;top:311.49999999999994px;width:18.40px;height:0.80px;background:#d0d0d0;"></div>
<div class="t" style="left:-291.1px;width:600px;text-align:center;top:300.63px;font-size:8.7px;line-height:8.7px;color:#262626;font-weight:normal;font-family:'Liberation Sans';transform:scaleX(0.95);">8</div>
<div class="r" style="left:0px;top:326.13999999999993px;width:18.40px;height:0.80px;background:#d0d0d0;"></div>
<div class="t" style="left:-291.1px;width:600px;text-align:center;top:315.27px;font-size:8.7px;line-height:8.7px;color:#262626;font-weight:normal;font-family:'Liberation Sans';transform:scaleX(0.95);">9</div>
<div class="r" style="left:0px;top:340.7799999999999px;width:18.40px;height:0.80px;background:#d0d0d0;"></div>
<div class="t" style="left:-291.1px;width:600px;text-align:center;top:329.91px;font-size:8.7px;line-height:8.7px;color:#262626;font-weight:normal;font-family:'Liberation Sans';transform:scaleX(0.95);">10</div>
<div class="r" style="left:0px;top:355.4199999999999px;width:18.40px;height:0.80px;background:#d0d0d0;"></div>
<div class="t" style="left:-291.1px;width:600px;text-align:center;top:344.55px;font-size:8.7px;line-height:8.7px;color:#262626;font-weight:normal;font-family:'Liberation Sans';transform:scaleX(0.95);">11</div>
<div class="r" style="left:0px;top:370.0599999999999px;width:18.40px;height:0.80px;background:#d0d0d0;"></div>
<div class="t" style="left:-291.1px;width:600px;text-align:center;top:359.19px;font-size:8.7px;line-height:8.7px;color:#262626;font-weight:normal;font-family:'Liberation Sans';transform:scaleX(0.95);">12</div>
<div class="r" style="left:0px;top:384.6999999999999px;width:18.40px;height:0.80px;background:#d0d0d0;"></div>
<div class="t" style="left:-291.1px;width:600px;text-align:center;top:373.83px;font-size:8.7px;line-height:8.7px;color:#262626;font-weight:normal;font-family:'Liberation Sans';transform:scaleX(0.95);">13</div>
<div class="r" style="left:0px;top:399.33999999999986px;width:18.40px;height:0.80px;background:#d0d0d0;"></div>
<div class="t" style="left:-291.1px;width:600px;text-align:center;top:388.47px;font-size:8.7px;line-height:8.7px;color:#262626;font-weight:normal;font-family:'Liberation Sans';transform:scaleX(0.95);">14</div>
<div class="r" style="left:0px;top:413.97999999999985px;width:18.40px;height:0.80px;background:#d0d0d0;"></div>
<div class="t" style="left:-291.1px;width:600px;text-align:center;top:403.11px;font-size:8.7px;line-height:8.7px;color:#262626;font-weight:normal;font-family:'Liberation Sans';transform:scaleX(0.95);">15</div>
<div class="r" style="left:0px;top:428.61999999999983px;width:18.40px;height:0.80px;background:#d0d0d0;"></div>
<div class="t" style="left:-291.1px;width:600px;text-align:center;top:417.75px;font-size:8.7px;line-height:8.7px;color:#262626;font-weight:normal;font-family:'Liberation Sans';transform:scaleX(0.95);">16</div>
<div class="r" style="left:0px;top:443.2599999999998px;width:18.40px;height:0.80px;background:#d0d0d0;"></div>
<div class="t" style="left:-291.1px;width:600px;text-align:center;top:432.39px;font-size:8.7px;line-height:8.7px;color:#262626;font-weight:normal;font-family:'Liberation Sans';transform:scaleX(0.95);">17</div>
<div class="r" style="left:0px;top:457.8999999999998px;width:18.40px;height:0.80px;background:#d0d0d0;"></div>
<div class="t" style="left:-291.1px;width:600px;text-align:center;top:447.03px;font-size:8.7px;line-height:8.7px;color:#262626;font-weight:normal;font-family:'Liberation Sans';transform:scaleX(0.95);">18</div>
<div class="r" style="left:0px;top:472.5399999999998px;width:18.40px;height:0.80px;background:#d0d0d0;"></div>
<div class="t" style="left:-291.1px;width:600px;text-align:center;top:461.67px;font-size:8.7px;line-height:8.7px;color:#262626;font-weight:normal;font-family:'Liberation Sans';transform:scaleX(0.95);">19</div>
<div class="r" style="left:0px;top:487.1799999999998px;width:18.40px;height:0.80px;background:#d0d0d0;"></div>
<div class="t" style="left:-291.1px;width:600px;text-align:center;top:476.31px;font-size:8.7px;line-height:8.7px;color:#262626;font-weight:normal;font-family:'Liberation Sans';transform:scaleX(0.95);">20</div>
<div class="r" style="left:0px;top:501.81999999999977px;width:18.40px;height:0.80px;background:#d0d0d0;"></div>
<div class="t" style="left:-291.1px;width:600px;text-align:center;top:490.95px;font-size:8.7px;line-height:8.7px;color:#262626;font-weight:normal;font-family:'Liberation Sans';transform:scaleX(0.95);">21</div>
<div class="r" style="left:0px;top:516.4599999999998px;width:18.40px;height:0.80px;background:#d0d0d0;"></div>
<div class="t" style="left:-291.1px;width:600px;text-align:center;top:505.59px;font-size:8.7px;line-height:8.7px;color:#262626;font-weight:normal;font-family:'Liberation Sans';transform:scaleX(0.95);">22</div>
<div class="r" style="left:0px;top:531.0999999999998px;width:18.40px;height:0.80px;background:#d0d0d0;"></div>
<div class="t" style="left:-291.1px;width:600px;text-align:center;top:520.23px;font-size:8.7px;line-height:8.7px;color:#262626;font-weight:normal;font-family:'Liberation Sans';transform:scaleX(0.95);">23</div>
<div class="r" style="left:118.7px;top:195px;width:865.30px;height:43.70px;background:#6699cf;"></div>
<div class="r" style="left:118.7px;top:165.4px;width:865.30px;height:29.60px;background:#e8e8e8;"></div>
<div class="r" style="left:118.7px;top:166px;width:865.30px;height:29.00px;background:#76879a;"></div>
<div class="r" style="left:118.7px;top:166px;width:93.80px;height:29.00px;background:#393939;"></div>
<div class="r" style="left:213.5px;top:166px;width:93.00px;height:29.00px;background:#393939;"></div>
<div class="r" style="left:307.5px;top:166px;width:95.00px;height:29.00px;background:#393939;"></div>
<div class="r" style="left:403.5px;top:165.4px;width:96.00px;height:29.60px;background:#6699cf;"></div>
<div class="r" style="left:500.5px;top:166px;width:94.20px;height:29.00px;background:#393939;"></div>
<div class="r" style="left:595.7px;top:166px;width:93.30px;height:29.00px;background:#393939;"></div>
<div class="r" style="left:690px;top:166px;width:93.80px;height:29.00px;background:#393939;"></div>
<div class="r" style="left:784.8px;top:166px;width:93.50px;height:29.00px;background:#393939;"></div>
<div class="r" style="left:879.3px;top:166px;width:104.70px;height:29.00px;background:#393939;"></div>
<div class="r" style="left:24.3px;top:165.4px;width:94.40px;height:73.30px;background:#f4b800;"></div>
<div class="t" style="left:-132.5px;width:600px;text-align:center;top:196.20px;font-size:11.6px;line-height:11.6px;color:#fff;font-weight:normal;font-family:'Liberation Sans';">Cadastro de</div>
<div class="t" style="left:-132.5px;width:600px;text-align:center;top:209.60px;font-size:11.6px;line-height:11.6px;color:#fff;font-weight:normal;font-family:'Liberation Sans';">Cliente</div>
<div class="t" style="left:-39px;width:600px;text-align:center;top:196.70px;font-size:11.6px;line-height:11.6px;color:#fff;font-weight:normal;font-family:'Liberation Sans';">Lançamentos</div>
<div class="t" style="left:-39px;width:600px;text-align:center;top:210.40px;font-size:11.6px;line-height:11.6px;color:#fff;font-weight:normal;font-family:'Liberation Sans';">de Frete</div>
<div class="t" style="left:58.19999999999999px;width:600px;text-align:center;top:204.60px;font-size:11.4px;line-height:11.4px;color:#fff;font-weight:normal;font-family:'Liberation Sans';">Relatórios</div>
<div class="t" style="left:153.7px;width:600px;text-align:center;top:204.60px;font-size:11.4px;line-height:11.4px;color:#fff;font-weight:normal;font-family:'Liberation Sans';">Dashboard</div>
<div class="t" style="left:249.5px;width:600px;text-align:center;top:204.60px;font-size:11.4px;line-height:11.4px;color:#fff;font-weight:normal;font-family:'Liberation Sans';">Instruções</div>
<div class="t" style="left:342.70000000000005px;width:600px;text-align:center;top:204.60px;font-size:11.4px;line-height:11.4px;color:#fff;font-weight:normal;font-family:'Liberation Sans';">Dúvidas</div>
<div class="t" style="left:435.70000000000005px;width:600px;text-align:center;top:204.60px;font-size:11.4px;line-height:11.4px;color:#fff;font-weight:normal;font-family:'Liberation Sans';">Sugestões</div>
<div class="t" style="left:532.5px;width:600px;text-align:center;top:205.10px;font-size:11.4px;line-height:11.4px;color:#fff;font-weight:normal;font-family:'Liberation Sans';">Sobre nós</div>
<div class="r" style="left:406px;top:224.5px;width:94.00px;height:14.00px;background:#fff;"></div>
<div class="t" style="left:151.7px;width:600px;text-align:center;top:227.85px;font-size:11.3px;line-height:11.3px;color:#222;font-weight:normal;font-family:'Liberation Sans';">Cliente</div>
<div class="t" style="left:283.70000000000005px;width:600px;text-align:center;top:227.85px;font-size:11.3px;line-height:11.3px;color:#f4f4f4;font-weight:normal;font-family:'Liberation Sans';">Geral</div>
<svg class="r" style="left:152px;top:164px" width="30" height="30" viewBox="0 0 30 30"><g transform="translate(15.4,15) rotate(45) scale(0.93)"><rect x="-3" y="-16.5" width="6" height="4.3" rx="1" fill="#fff"/><rect x="-3" y="-11" width="6" height="20.5" fill="#fff"/><path d="M-3 10.5h6L0 16.8z" fill="#fff"/><path d="M-1 14.3h2L0 16.8z" fill="#393939"/></g></svg>
<svg class="r" style="left:247px;top:172px" width="30" height="17" viewBox="0 0 30 17"><rect x="1.4" y="1.4" width="17.2" height="10.6" fill="#fff"/><path d="M19.5 4.5h4.5l3.6 4.5v4.6h-8.1z" fill="#fff"/><path d="M21 5.8h2.6l2.4 3h-5z" fill="#393939"/><rect x="1.4" y="12.8" width="26.2" height="1.3" fill="#fff"/><circle cx="6.3" cy="14.2" r="2.6" fill="#fff" stroke="#393939" stroke-width="1.2"/><circle cx="22.8" cy="14.2" r="2.6" fill="#fff" stroke="#393939" stroke-width="1.2"/></svg>
<svg class="r" style="left:344px;top:169px" width="22" height="24" viewBox="0 0 22 24"><path d="M2.4 1.4h10.2l6.2 6.2v14.9H2.4z" fill="none" stroke="#fff" stroke-width="1.9"/><path d="M12.2 1.4v6.6h6.6" fill="#fff" stroke="#fff" stroke-width="1.2"/></svg>
<svg class="r" style="left:437px;top:168px" width="27" height="26" viewBox="0 0 27 26"><path d="M13.00 12.40L23.83 14.31A11 11 0 1 1 13.00 1.40z" fill="#fff" stroke="#6699cf" stroke-width="1"/><path d="M13.45 11.62L13.45 0.62A11 11 0 0 1 22.98 6.12z" fill="#fff" stroke="#6699cf" stroke-width="1"/><path d="M13.89 12.24L23.41 6.74A11 11 0 0 1 24.72 14.15z" fill="#fff" stroke="#6699cf" stroke-width="1"/></svg>
<svg class="r" style="left:532px;top:168px" width="32" height="25" viewBox="0 0 32 25"><rect x="8.6" y="2" width="16.6" height="12.6" fill="none" stroke="#fff" stroke-width="1.3"/><path d="M6.5 11.5L18 5" stroke="#fff" stroke-width="1.3"/><circle cx="5.2" cy="6.3" r="2.3" fill="#fff"/><path d="M2.6 9.4h5.2l2-1.2 0.7 1.2-2.6 2v5.8H7v7.2H5.7v-7.2H4.7v7.2H3.4v-7.2H2.6z" fill="#fff"/><g fill="#fff"><circle cx="14.3" cy="18.6" r="1.4"/><path d="M12 23.4a2.3 2.3 0 0 1 4.6 0z"/><circle cx="19.6" cy="18.6" r="1.4"/><path d="M17.3 23.4a2.3 2.3 0 0 1 4.6 0z"/><circle cx="24.9" cy="18.6" r="1.4"/><path d="M22.6 23.4a2.3 2.3 0 0 1 4.6 0z"/></g></svg>
<svg class="r" style="left:628px;top:168px" width="26" height="25" viewBox="0 0 26 25"><rect x="11.4" y="1.2" width="12" height="9" fill="#fff"/><path d="M13.5 10v3l3-3z" fill="#fff"/><text x="15.2" y="8.6" font-size="8.2" font-weight="bold" fill="#393939" font-family="Liberation Sans">?</text><circle cx="6.5" cy="12.2" r="3.2" fill="#fff"/><path d="M1.4 22a5.1 5.1 0 0 1 10.2 0z" fill="#fff"/><circle cx="15.4" cy="15" r="3.5" fill="#fff" stroke="#393939" stroke-width="0.8"/><path d="M9.6 23.6a5.8 5.8 0 0 1 11.6 0z" fill="#fff" stroke="#393939" stroke-width="0.8"/></svg>
<svg class="r" style="left:722px;top:166px" width="28" height="28" viewBox="0 0 28 28"><circle cx="14" cy="13.4" r="6.6" fill="none" stroke="#fff" stroke-width="1.5"/><circle cx="14" cy="13.4" r="2.6" fill="none" stroke="#fff" stroke-width="1.5" stroke-dasharray="1.3 0.8"/><path d="M11.2 19.6v2.6h5.6v-2.6M11.6 23.6h4.8M12.6 25.3h2.8" fill="none" stroke="#fff" stroke-width="1.2"/><path d="M14 1.6v3M5.6 5.2l2 2M22.4 5.2l-2 2M2.4 13.4h3M22.6 13.4h3M6 21l2-1.8M22 21l-2-1.8" stroke="#fff" stroke-width="1.3"/></svg>
<svg class="r" style="left:812px;top:163px" width="36" height="32" viewBox="0 0 36 32"><g transform="scale(1.11)" fill="none" stroke="#fff" stroke-width="1.15"><path d="M8.3 10.3Q11 6.6 16.4 6.6Q21.8 6.6 24.5 10.3"/><path d="M8.3 10.3l-0.9-1.3M24.5 10.3l0.9-1.3"/><path d="M9.2 10.6Q8.6 19 16.4 26.7Q24.2 19 23.6 10.6"/><circle cx="13.2" cy="14" r="2.3"/><circle cx="19.6" cy="14" r="2.3"/><path d="M9.5 11.5Q13 10 16.4 12.3Q19.8 10 23.3 11.5"/><path d="M14 22.5l1.2 1.3 1.2-1.3 1.2 1.3 1.2-1.3"/></g><path d="M5 22.8h27.5" stroke="#fff" stroke-width="1.3"/></svg>
<svg class="r" style="left:22px;top:178px" width="40" height="34" viewBox="0 0 40 34"><g fill="none" stroke="#6b5a3c" stroke-width="1.15"><path d="M8.3 10.3Q11 6.6 16.4 6.6Q21.8 6.6 24.5 10.3"/><path d="M8.3 10.3l-0.9-1.3M24.5 10.3l0.9-1.3"/><path d="M9.2 10.6Q8.6 19 16.4 26.7Q24.2 19 23.6 10.6"/><circle cx="13.2" cy="14" r="2.3"/><circle cx="19.6" cy="14" r="2.3"/><path d="M9.5 11.5Q13 10 16.4 12.3Q19.8 10 23.3 11.5"/><path d="M14 22.5l1.2 1.3 1.2-1.3 1.2 1.3 1.2-1.3"/></g><path d="M4 22.1h24.8" stroke="#6b5a3c" stroke-width="1.2"/></svg>
<div class="t" style="left:52.5px;top:184.60px;font-size:19.2px;line-height:19.2px;color:#d9432a;font-weight:normal;font-family:'Liberation Sans';transform:scaleX(0.94) skewX(-7deg);transform-origin:0 50%;letter-spacing:-0.1px;-webkit-text-stroke:0.35px currentColor;">V<span style="position:relative">I<span style="position:absolute;left:0.6px;top:-1px;width:3px;height:3px;border-radius:2px;background:#f4a460"></span></span><span style="color:#5a5048">Z</span>UAL</div>
<div class="t" style="left:28.5px;top:206.20px;font-size:3.6px;line-height:3.6px;color:#a07c2a;font-weight:normal;font-family:'Liberation Sans';letter-spacing:1.05px;font-style:italic;opacity:0.8;">PLANILHAS EMPRESARIAIS</div>
<div class="r" style="left:97.5px;top:207.6px;width:20.00px;height:0.80px;background:#8a7a5a;"></div>
<div class="r" style="left:24.1px;top:252px;width:71.70px;height:18.40px;background:#fff;border:1px solid #9a9a9a;box-sizing:border-box;"></div>
<div class="r" style="left:78px;top:253px;width:16.80px;height:16.40px;background:#e1e1e1;border-left:1px solid #b8b8b8;box-sizing:border-box;"></div>
<svg class="r" style="left:82.4px;top:258.7px" width="9" height="5" viewBox="0 0 9 5"><path d="M0.5 0.3h8L4.5 4.6z" fill="#111"/></svg>
<div class="t" style="left:28.1px;top:258.10px;font-size:8.6px;line-height:8.6px;color:#222;font-weight:normal;font-family:'Liberation Sans';transform:scaleX(0.95);transform-origin:0 50%;">KM</div>
<div class="r" style="left:24.1px;top:276.1px;width:71.70px;height:18.60px;background:#fff;border:1px solid #9a9a9a;box-sizing:border-box;"></div>
<div class="r" style="left:78px;top:277.1px;width:16.80px;height:16.60px;background:#e1e1e1;border-left:1px solid #b8b8b8;box-sizing:border-box;"></div>
<svg class="r" style="left:82.4px;top:282.9px" width="9" height="5" viewBox="0 0 9 5"><path d="M0.5 0.3h8L4.5 4.6z" fill="#111"/></svg>
<div class="t" style="left:28.1px;top:282.30px;font-size:8.6px;line-height:8.6px;color:#222;font-weight:normal;font-family:'Liberation Sans';transform:scaleX(0.95);transform-origin:0 50%;">2020</div>
<div class="r" style="left:258.5px;top:276.2px;width:70.90px;height:18.30px;background:#fff;border:1px solid #9a9a9a;box-sizing:border-box;"></div>
<div class="r" style="left:311.8px;top:277.2px;width:16.60px;height:16.30px;background:#e1e1e1;border-left:1px solid #b8b8b8;box-sizing:border-box;"></div>
<svg class="r" style="left:316.1px;top:282.85px" width="9" height="5" viewBox="0 0 9 5"><path d="M0.5 0.3h8L4.5 4.6z" fill="#111"/></svg>
<div class="t" style="left:262.5px;top:282.25px;font-size:8.6px;line-height:8.6px;color:#222;font-weight:normal;font-family:'Liberation Sans';transform:scaleX(0.95);transform-origin:0 50%;">Março</div>
<div class="r" style="left:493px;top:276.5px;width:70.30px;height:18.30px;background:#fff;border:1px solid #9a9a9a;box-sizing:border-box;"></div>
<div class="r" style="left:546.2px;top:277.5px;width:16.10px;height:16.30px;background:#e1e1e1;border-left:1px solid #b8b8b8;box-sizing:border-box;"></div>
<svg class="r" style="left:550.25px;top:283.15px" width="9" height="5" viewBox="0 0 9 5"><path d="M0.5 0.3h8L4.5 4.6z" fill="#111"/></svg>
<div class="t" style="left:497px;top:282.55px;font-size:8.6px;line-height:8.6px;color:#222;font-weight:normal;font-family:'Liberation Sans';transform:scaleX(0.95);transform-origin:0 50%;">1</div>
<div class="r" style="left:752.2px;top:244.4px;width:208.40px;height:17.80px;background:#fff;border:1px solid #9a9a9a;box-sizing:border-box;"></div>
<div class="r" style="left:943.8px;top:245.4px;width:15.80px;height:15.80px;background:#e1e1e1;border-left:1px solid #b8b8b8;box-sizing:border-box;"></div>
<svg class="r" style="left:947.7px;top:250.8px" width="9" height="5" viewBox="0 0 9 5"><path d="M0.5 0.3h8L4.5 4.6z" fill="#111"/></svg>
<div class="t" style="left:756.2px;top:250.50px;font-size:8px;line-height:8px;color:#222;font-weight:normal;font-family:'Liberation Sans';transform:scaleX(0.95);transform-origin:0 50%;">CLIENTE 5</div>
<div class="r" style="left:24.3px;top:297.5px;width:188.10px;height:190.10px;background:#f7f7f7;border:1px solid #a9a9a9;box-sizing:border-box;"></div>
<div class="t" style="left:26.6px;top:300.90px;font-size:9.2px;line-height:9.2px;color:#111;font-weight:bold;font-family:'Liberation Sans';">Ano</div>
<svg class="r" style="left:24.3px;top:297.5px" width="188.1" height="140" viewBox="0 0 188.1 140"><path d="M89.52 11.10A60.1 60.1 0 0 1 102.01 12.52L96.71 36.44A35.6 35.6 0 0 0 89.31 35.60z" fill="#4f81bd" stroke="#fff" stroke-width="1.3"/><path d="M102.01 12.52A60.1 60.1 0 1 1 89.52 11.10L89.31 35.60A35.6 35.6 0 1 0 96.71 36.44z" fill="#ee4b2b" stroke="#fff" stroke-width="1.3"/></svg>
<div class="t" style="left:-174.5px;width:600px;text-align:center;top:360.70px;font-size:19.6px;line-height:19.6px;color:#6b9bd6;font-weight:bold;font-family:'Liberation Sans';letter-spacing:-0.3px;">4%</div>
<div class="t" style="left:26.6px;top:432.20px;font-size:9.6px;line-height:9.6px;color:#111;font-weight:bold;font-family:'Liberation Sans';letter-spacing:0px;">Valor do Frete</div>
<div class="r" style="left:24.3px;top:443.6px;width:188.10px;height:30.00px;background:#6699cc;border-top:1px solid #55718f;border-bottom:2px solid #5f7c99;border-left:1px solid #8a9aab;border-right:1px solid #8a9aab;box-sizing:border-box;"></div>
<div class="t" style="left:33.7px;top:452.20px;font-size:13.2px;line-height:13.2px;color:#fff;font-weight:bold;font-family:'Liberation Sans';">R$</div>
<div class="t" style="right:795.4px;top:451.80px;font-size:14px;line-height:14px;color:#fff;font-weight:bold;font-family:'Liberation Sans';">232,06</div>
<div class="r" style="left:24.3px;top:473.6px;width:46.90px;height:14.00px;background:#a6a6a6;border-left:1px solid #a9a9a9;border-bottom:1px solid #a0a0a0;box-sizing:border-box;"></div>
<div class="r" style="left:71.2px;top:473.6px;width:141.20px;height:14.00px;background:#6699cc;border-bottom:1px solid #a0a0a0;border-right:1px solid #a9a9a9;box-sizing:border-box;"></div>
<div class="t" style="left:26.6px;top:476.60px;font-size:8.8px;line-height:8.8px;color:#111;font-weight:bold;font-family:'Liberation Sans';letter-spacing:-0.2px;">Lucro</div>
<div class="t" style="left:78.0px;top:476.60px;font-size:8.8px;line-height:8.8px;color:#fff;font-weight:bold;font-family:'Liberation Sans';">R$</div>
<div class="t" style="right:793.8px;top:476.60px;font-size:8.8px;line-height:8.8px;color:#fff;font-weight:bold;font-family:'Liberation Sans';">99,38</div>
<div class="r" style="left:258.5px;top:297.5px;width:187.80px;height:190.10px;background:#f7f7f7;border:1px solid #a9a9a9;box-sizing:border-box;"></div>
<div class="t" style="left:260.8px;top:300.90px;font-size:9.2px;line-height:9.2px;color:#111;font-weight:bold;font-family:'Liberation Sans';">Mês</div>
<svg class="r" style="left:258.5px;top:297.5px" width="187.8" height="140" viewBox="0 0 187.8 140"><path d="M94.00 10.70A60.1 60.1 0 0 1 140.71 108.62L121.67 93.20A35.6 35.6 0 0 0 94.00 35.20z" fill="#53ab3f" stroke="#fff" stroke-width="1.3"/><path d="M140.71 108.62A60.1 60.1 0 1 1 94.00 10.70L94.00 35.20A35.6 35.6 0 1 0 121.67 93.20z" fill="#ee4b2b" stroke="#fff" stroke-width="1.3"/></svg>
<div class="t" style="left:62.39999999999998px;width:600px;text-align:center;top:360.70px;font-size:19.6px;line-height:19.6px;color:#53ab3f;font-weight:bold;font-family:'Liberation Sans';letter-spacing:-0.3px;">56%</div>
<div class="t" style="left:260.8px;top:432.20px;font-size:9.6px;line-height:9.6px;color:#111;font-weight:bold;font-family:'Liberation Sans';letter-spacing:0px;">Valor do Frete</div>
<div class="r" style="left:258.5px;top:443.6px;width:187.80px;height:30.00px;background:#6699cc;border-top:1px solid #55718f;border-bottom:2px solid #5f7c99;border-left:1px solid #8a9aab;border-right:1px solid #8a9aab;box-sizing:border-box;"></div>
<div class="t" style="left:267.9px;top:452.20px;font-size:13.2px;line-height:13.2px;color:#fff;font-weight:bold;font-family:'Liberation Sans';">R$</div>
<div class="t" style="right:561.5px;top:451.80px;font-size:14px;line-height:14px;color:#fff;font-weight:bold;font-family:'Liberation Sans';">162,00</div>
<div class="r" style="left:258.5px;top:473.6px;width:47.20px;height:14.00px;background:#a6a6a6;border-left:1px solid #a9a9a9;border-bottom:1px solid #a0a0a0;box-sizing:border-box;"></div>
<div class="r" style="left:305.7px;top:473.6px;width:140.60px;height:14.00px;background:#53ab3f;border-bottom:1px solid #a0a0a0;border-right:1px solid #a9a9a9;box-sizing:border-box;"></div>
<div class="t" style="left:260.8px;top:476.60px;font-size:8.8px;line-height:8.8px;color:#111;font-weight:bold;font-family:'Liberation Sans';letter-spacing:-0.2px;">Lucro</div>
<div class="t" style="left:312.5px;top:476.60px;font-size:8.8px;line-height:8.8px;color:#fff;font-weight:bold;font-family:'Liberation Sans';">R$</div>
<div class="t" style="right:559.9px;top:476.60px;font-size:8.8px;line-height:8.8px;color:#fff;font-weight:bold;font-family:'Liberation Sans';">66,00</div>
<div class="r" style="left:493px;top:297.5px;width:187.70px;height:190.10px;background:#f7f7f7;border:1px solid #a9a9a9;box-sizing:border-box;"></div>
<div class="t" style="left:495.3px;top:300.90px;font-size:9.2px;line-height:9.2px;color:#111;font-weight:bold;font-family:'Liberation Sans';">Dia</div>
<svg class="r" style="left:493px;top:297.5px" width="187.70000000000005" height="140" viewBox="0 0 187.70000000000005 140"><path d="M94.50 11.50A60.1 60.1 0 0 1 94.50 131.70L94.50 107.20A35.6 35.6 0 0 0 94.50 36.00z" fill="#f0b400" stroke="#fff" stroke-width="1.3"/><path d="M94.50 131.70A60.1 60.1 0 0 1 94.50 11.50L94.50 36.00A35.6 35.6 0 0 0 94.50 107.20z" fill="#ee4b2b" stroke="#fff" stroke-width="1.3"/></svg>
<div class="t" style="left:291.29999999999995px;width:600px;text-align:center;top:360.70px;font-size:19.6px;line-height:19.6px;color:#f0b400;font-weight:bold;font-family:'Liberation Sans';letter-spacing:-0.3px;">100%</div>
<div class="t" style="left:495.3px;top:432.20px;font-size:9.6px;line-height:9.6px;color:#111;font-weight:bold;font-family:'Liberation Sans';letter-spacing:0px;">Valor do Frete</div>
<div class="r" style="left:493px;top:443.6px;width:187.70px;height:30.00px;background:#6699cc;border-top:1px solid #55718f;border-bottom:2px solid #5f7c99;border-left:1px solid #8a9aab;border-right:1px solid #8a9aab;box-sizing:border-box;"></div>
<div class="t" style="left:502.4px;top:452.20px;font-size:13.2px;line-height:13.2px;color:#fff;font-weight:bold;font-family:'Liberation Sans';">R$</div>
<div class="t" style="right:327.0999999999999px;top:451.80px;font-size:14px;line-height:14px;color:#fff;font-weight:bold;font-family:'Liberation Sans';">162,00</div>
<div class="r" style="left:493px;top:473.6px;width:46.00px;height:14.00px;background:#a6a6a6;border-left:1px solid #a9a9a9;border-bottom:1px solid #a0a0a0;box-sizing:border-box;"></div>
<div class="r" style="left:539px;top:473.6px;width:141.70px;height:14.00px;background:#f0b400;border-bottom:1px solid #a0a0a0;border-right:1px solid #a9a9a9;box-sizing:border-box;"></div>
<div class="t" style="left:495.3px;top:476.60px;font-size:8.8px;line-height:8.8px;color:#111;font-weight:bold;font-family:'Liberation Sans';letter-spacing:-0.2px;">Lucro</div>
<div class="t" style="left:545.8px;top:476.60px;font-size:8.8px;line-height:8.8px;color:#fff;font-weight:bold;font-family:'Liberation Sans';">R$</div>
<div class="t" style="right:325.5px;top:476.60px;font-size:8.8px;line-height:8.8px;color:#fff;font-weight:bold;font-family:'Liberation Sans';">66,00</div>
<div class="t" style="left:729.3px;top:286.65px;font-size:9.7px;line-height:9.7px;color:#111;font-weight:bold;font-family:'Liberation Sans';transform:scaleX(0.95);transform-origin:0 50%;">Total da Carga para o dia consultado</div>
<div class="r" style="left:727px;top:297.2px;width:235.00px;height:44.10px;background:#52ab3f;"></div>
<div class="t" style="left:740.5px;top:308.50px;font-size:23.6px;line-height:23.6px;color:#fff;font-weight:normal;font-family:'Liberation Sans';letter-spacing:-1.6px;">R$</div>
<div class="t" style="right:50.700000000000045px;top:308.50px;font-size:23.6px;line-height:23.6px;color:#fff;font-weight:normal;font-family:'Liberation Sans';letter-spacing:0.7px;">800,00</div>
<div class="t" style="left:729.3px;top:359.65px;font-size:9.7px;line-height:9.7px;color:#111;font-weight:bold;font-family:'Liberation Sans';transform:scaleX(0.95);transform-origin:0 50%;">Total do Peso para o dia consultado</div>
<div class="r" style="left:727px;top:370.2px;width:235.00px;height:44.60px;background:#f0b400;"></div>
<div class="t" style="left:544.7px;width:600px;text-align:center;top:381.90px;font-size:23px;line-height:23px;color:#fff;font-weight:normal;font-family:'Liberation Sans';">50 Kg</div>
<div class="t" style="left:729.3px;top:433.05px;font-size:9.9px;line-height:9.9px;color:#111;font-weight:bold;font-family:'Liberation Sans';transform:scaleX(0.96);transform-origin:0 50%;">Total do KM rodado naquele dia (se aplicado)</div>
<div class="r" style="left:727px;top:443.6px;width:235.00px;height:44.70px;background:#bfbfbf;"></div>
<div class="t" style="left:544px;width:600px;text-align:center;top:455.10px;font-size:23.4px;line-height:23.4px;color:#fafafa;font-weight:normal;font-family:'Liberation Sans';">60 Km</div>
<div class="r" style="left:984.2px;top:152px;width:15.80px;height:372.50px;background:#e6e6e6;"></div>
<div class="r" style="left:984.2px;top:152px;width:1.00px;height:372.50px;background:#b8b8b8;"></div>
<div class="r" style="left:987px;top:153px;width:10.60px;height:10.50px;background:#fff;border:1px solid #c4c4c4;box-sizing:border-box;"></div>
<svg class="r" style="left:988.5px;top:155.5px" width="8" height="5" viewBox="0 0 8 5"><path d="M0.5 4.5L4 1l3.5 3.5z" fill="#555"/></svg>
<div class="r" style="left:987px;top:164.5px;width:10.20px;height:151.80px;background:#fff;border:1px solid #c4c4c4;box-sizing:border-box;"></div>
<div class="r" style="left:987.2px;top:514.8px;width:10.00px;height:9.80px;background:#fff;border:1px solid #c4c4c4;box-sizing:border-box;"></div>
<svg class="r" style="left:988.5px;top:517.5px" width="8" height="5" viewBox="0 0 8 5"><path d="M0.5 0.5L4 4l3.5-3.5z" fill="#555"/></svg>
<div class="r" style="left:0px;top:524.5px;width:1000.00px;height:21.00px;background:#e6e6e6;"></div>
<div class="r" style="left:0px;top:524.3px;width:984.20px;height:1.70px;background:#c8c8c8;"></div>
<div class="r" style="left:0px;top:544.8px;width:1000.00px;height:0.80px;background:#d4d4d4;"></div>
<svg class="r" style="left:18px;top:531px" width="6" height="8" viewBox="0 0 6 8"><path d="M4.5 0.5L1 4l3.5 3.5" fill="#bdbdbd"/></svg>
<svg class="r" style="left:40px;top:531px" width="6" height="8" viewBox="0 0 6 8"><path d="M1.5 0.5L5 4l-3.5 3.5" fill="#bdbdbd"/></svg>
<div class="r" style="left:73.5px;top:527.5px;width:0.90px;height:14.50px;background:#b4b4b4;"></div>
<div class="r" style="left:148px;top:527.5px;width:0.90px;height:14.50px;background:#b4b4b4;"></div>
<div class="r" style="left:206px;top:527.5px;width:0.90px;height:14.50px;background:#b4b4b4;"></div>
<div class="r" style="left:270.5px;top:527.5px;width:0.90px;height:14.50px;background:#b4b4b4;"></div>
<div class="r" style="left:353px;top:527.5px;width:0.90px;height:14.50px;background:#b4b4b4;"></div>
<div class="r" style="left:414px;top:527.5px;width:0.90px;height:14.50px;background:#b4b4b4;"></div>
<div class="r" style="left:479.5px;top:527.5px;width:0.90px;height:14.50px;background:#b4b4b4;"></div>
<div class="r" style="left:548.5px;top:527.5px;width:0.90px;height:14.50px;background:#b4b4b4;"></div>
<div class="r" style="left:733px;top:527.5px;width:0.90px;height:14.50px;background:#b4b4b4;"></div>
<div class="r" style="left:763.3px;top:527.5px;width:0.90px;height:14.50px;background:#b4b4b4;"></div>
<div class="r" style="left:802px;top:527.5px;width:0.90px;height:14.50px;background:#b4b4b4;"></div>
<div class="r" style="left:837px;top:527.5px;width:0.90px;height:14.50px;background:#b4b4b4;"></div>
<div class="r" style="left:872.3px;top:527.5px;width:0.90px;height:14.50px;background:#b4b4b4;"></div>
<div class="r" style="left:635px;top:524.5px;width:49.00px;height:18.10px;background:#fff;border-left:1px solid #b4b4b4;border-right:1px solid #b4b4b4;box-sizing:border-box;"></div>
<div class="r" style="left:635px;top:541px;width:49.00px;height:1.60px;background:#217346;"></div>
<div class="t" style="left:-189.5px;width:600px;text-align:center;top:530.60px;font-size:8.8px;line-height:8.8px;color:#444;font-weight:normal;font-family:'Liberation Sans';">CADCLIENTE</div>
<div class="t" style="left:-123.5px;width:600px;text-align:center;top:530.60px;font-size:8.8px;line-height:8.8px;color:#444;font-weight:normal;font-family:'Liberation Sans';">LANCKM</div>
<div class="t" style="left:-63px;width:600px;text-align:center;top:530.60px;font-size:8.8px;line-height:8.8px;color:#444;font-weight:normal;font-family:'Liberation Sans';">LANCPESO</div>
<div class="t" style="left:12px;width:600px;text-align:center;top:530.60px;font-size:8.8px;line-height:8.8px;color:#444;font-weight:normal;font-family:'Liberation Sans';">LANCVOLUME</div>
<div class="t" style="left:82.5px;width:600px;text-align:center;top:530.60px;font-size:8.8px;line-height:8.8px;color:#444;font-weight:normal;font-family:'Liberation Sans';">RELATKM</div>
<div class="t" style="left:146px;width:600px;text-align:center;top:530.60px;font-size:8.8px;line-height:8.8px;color:#444;font-weight:normal;font-family:'Liberation Sans';">RELAT2KM</div>
<div class="t" style="left:214px;width:600px;text-align:center;top:530.60px;font-size:8.8px;line-height:8.8px;color:#444;font-weight:normal;font-family:'Liberation Sans';">RELATPESO</div>
<div class="t" style="left:291.5px;width:600px;text-align:center;top:530.60px;font-size:8.8px;line-height:8.8px;color:#444;font-weight:normal;font-family:'Liberation Sans';">RELATVOLUME</div>
<div class="t" style="left:407.5px;width:600px;text-align:center;top:530.60px;font-size:8.8px;line-height:8.8px;color:#444;font-weight:normal;font-family:'Liberation Sans';">DASH2</div>
<div class="t" style="left:448.5px;width:600px;text-align:center;top:530.60px;font-size:8.8px;line-height:8.8px;color:#444;font-weight:normal;font-family:'Liberation Sans';">INI</div>
<div class="t" style="left:483px;width:600px;text-align:center;top:530.60px;font-size:8.8px;line-height:8.8px;color:#444;font-weight:normal;font-family:'Liberation Sans';">DUV</div>
<div class="t" style="left:520.5px;width:600px;text-align:center;top:530.60px;font-size:8.8px;line-height:8.8px;color:#444;font-weight:normal;font-family:'Liberation Sans';">SUG</div>
<div class="t" style="left:555px;width:600px;text-align:center;top:530.60px;font-size:8.8px;line-height:8.8px;color:#444;font-weight:normal;font-family:'Liberation Sans';">LUZ</div>
<div class="t" style="left:359.5px;width:600px;text-align:center;top:530.50px;font-size:9px;line-height:9px;color:#217346;font-weight:bold;font-family:'Liberation Sans';">DASH1</div>
<svg class="r" style="left:894px;top:526px" width="17" height="17" viewBox="0 0 17 17"><circle cx="8.5" cy="8.5" r="6.3" fill="none" stroke="#666" stroke-width="1"/><path d="M8.5 5v7M5 8.5h7" stroke="#666" stroke-width="1"/></svg>
<div class="r" style="left:930.5px;top:529.5px;width:1.30px;height:1.20px;background:#9c9c9c;"></div>
<div class="r" style="left:930.5px;top:533.5px;width:1.30px;height:1.20px;background:#9c9c9c;"></div>
<div class="r" style="left:930.5px;top:537.5px;width:1.30px;height:1.20px;background:#9c9c9c;"></div>
<div class="r" style="left:942.4px;top:526.5px;width:11.80px;height:15.00px;background:#fff;border:1px solid #c4c4c4;box-sizing:border-box;"></div>
<svg class="r" style="left:945.5px;top:530.5px" width="6" height="8" viewBox="0 0 6 8"><path d="M4.5 0.5L1 4l3.5 3.5z" fill="#444"/></svg>
<div class="r" style="left:954.2px;top:526.5px;width:10.80px;height:15.00px;background:#fff;border-top:1px solid #c4c4c4;border-bottom:1px solid #c4c4c4;box-sizing:border-box;"></div>
<div class="r" style="left:965px;top:527px;width:4.00px;height:14.00px;background:#d8d8d8;"></div>
<div class="r" style="left:975.5px;top:526.5px;width:9.70px;height:15.00px;background:#fff;border:1px solid #c4c4c4;box-sizing:border-box;"></div>
<svg class="r" style="left:977.5px;top:530.5px" width="6" height="8" viewBox="0 0 6 8"><path d="M1.5 0.5L5 4l-3.5 3.5z" fill="#444"/></svg>
<div class="r" style="left:0px;top:545.5px;width:1000.00px;height:16.50px;background:#f3f2f1;"></div>
<div class="r" style="left:0px;top:545.5px;width:1000.00px;height:0.80px;background:#dedede;"></div>
<svg class="r" style="left:5px;top:548px" width="13" height="12" viewBox="0 0 13 12"><rect x="1" y="1" width="8" height="10" fill="none" stroke="#666" stroke-width="1"/><circle cx="9.5" cy="7.5" r="3" fill="#f3f2f1" stroke="#666" stroke-width="1"/><circle cx="9.5" cy="7.5" r="1.2" fill="#666"/></svg>
<div class="r" style="left:780.5px;top:546.3px;width:28.90px;height:15.70px;background:#d6d6d6;"></div>
<svg class="r" style="left:789px;top:548.5px" width="11" height="9" viewBox="0 0 11 9"><rect x="0.5" y="0.5" width="10" height="8" fill="none" stroke="#444" stroke-width="0.9"/><path d="M0.5 3.2h10M0.5 5.9h10M3.8 0.5v8M7.2 0.5v8" stroke="#444" stroke-width="0.9"/></svg>
<svg class="r" style="left:818.5px;top:548.5px" width="11" height="9" viewBox="0 0 11 9"><rect x="0.5" y="0.5" width="10" height="8" fill="none" stroke="#555" stroke-width="0.9"/><rect x="3" y="2" width="5" height="5" fill="none" stroke="#555" stroke-width="0.9"/></svg>
<svg class="r" style="left:848px;top:548.5px" width="11" height="9" viewBox="0 0 11 9"><path d="M0.5 8.5V0.5h10v8z M5 0.5v4.5h5.5" fill="none" stroke="#555" stroke-width="0.9"/></svg>
<div class="r" style="left:871.5px;top:553.5px;width:6.00px;height:1.00px;background:#555;"></div>
<div class="r" style="left:883px;top:553.6px;width:72.00px;height:0.80px;background:#a8a8a8;"></div>
<div class="r" style="left:917.5px;top:549.5px;width:3.50px;height:9.00px;background:#666;"></div>
<div class="r" style="left:958px;top:553.5px;width:6.00px;height:1.00px;background:#555;"></div>
<div class="r" style="left:960.5px;top:551px;width:1.00px;height:6.00px;background:#555;"></div>
<div class="t" style="left:974.5px;top:550.05px;font-size:7.9px;line-height:7.9px;color:#444;font-weight:normal;font-family:'Liberation Sans';">100%</div>
</body></html>
